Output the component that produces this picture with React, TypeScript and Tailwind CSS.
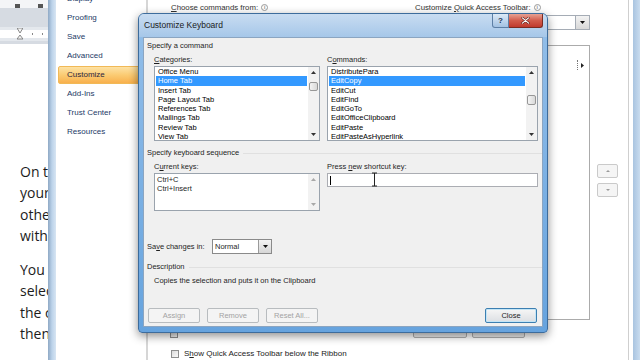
import React from "react";

const categories = ["Office Menu", "Home Tab", "Insert Tab", "Page Layout Tab", "References Tab", "Mailings Tab", "Review Tab", "View Tab"];
const commands = ["DistributePara", "EditCopy", "EditCut", "EditFind", "EditGoTo", "EditOfficeClipboard", "EditPaste", "EditPasteAsHyperlink"];
const options = ["Display", "Proofing", "Save", "Advanced", "Customize", "Add-Ins", "Trust Center", "Resources"];

function Tri({ dir, className }: { dir: "up" | "down" | "right"; className?: string }) {
    const pts = dir === "up" ? "0,4 3.5,0 7,4" : dir === "down" ? "0,0 7,0 3.5,4" : "0,0 4,3.5 0,7";
    const box = dir === "right" ? "0 0 4 7" : "0 0 7 4";
    return (
        <svg viewBox={box} className={className} preserveAspectRatio="none">
            <polygon points={pts} fill="currentColor" />
        </svg>
    );
}

function Info() {
    return (
        <span className="w-[7px] h-[7px] rounded-full border border-[#9a9a9a] text-[#8a8a8a] text-[5px] leading-[5px] flex items-center justify-center font-bold">i</span>
    );
}

function ScrollBar({ thumb, disabled }: { thumb?: string; disabled?: boolean }) {
    const arrow = disabled ? "text-[#a8a8a8]" : "text-[#333]";
    return (
        <div className="w-[11px] flex flex-col bg-[#f2f2f2]">
            <div className={`h-[11px] flex items-center justify-center ${arrow}`}>
                <Tri dir="up" className="w-[5px] h-[3px]" />
            </div>
            <div className="flex-1">
                {thumb && <div className={`mx-[1px] rounded-[2px] border border-[#979797] bg-gradient-to-r from-[#f4f4f4] to-[#d9d9d9] ${thumb}`} />}
            </div>
            <div className={`h-[11px] flex items-center justify-center ${arrow}`}>
                <Tri dir="down" className="w-[5px] h-[3px]" />
            </div>
        </div>
    );
}

function ListBox({ items, selected, thumb, className }: { items: string[]; selected: number; thumb: string; className: string }) {
    return (
        <div className={`flex border border-[#9aa3ad] bg-white ${className}`}>
            <div className="flex-1 flex flex-col px-[1px] overflow-hidden">
                {items.map((t, i) => (
                    <div
                        key={t}
                        className={`h-[9.25px] shrink-0 leading-[9.25px] pl-[2px] whitespace-nowrap ${i === selected ? "bg-[#3399ff] text-white" : "text-black"}`}
                    >
                        {t}
                    </div>
                ))}
            </div>
            <ScrollBar thumb={thumb} />
        </div>
    );
}

function GroupHeader({ label, line }: { label: string; line?: boolean }) {
    return (
        <div className="h-[16px] shrink-0 flex items-center pl-[3px] gap-[4px]">
            <span className="whitespace-nowrap">{label}</span>
            {line && <div className="flex-1 h-px bg-[#e0e0e0]" />}
        </div>
    );
}

function DlgButton({ label, disabled }: { label: string; disabled?: boolean }) {
    return (
        <div
            className={`w-[52px] h-[15px] rounded-[2px] border flex items-center justify-center ${
                disabled
                    ? "border-[#b8bcbf] bg-[#f4f4f4] text-[#a3a3a3]"
                    : "border-[#3c7fb1] bg-gradient-to-b from-[#f6f6f6] to-[#dcdfe3] text-[#1e1e1e] shadow-[inset_0_0_0_1px_#c4e5f6]"
            }`}
        >
            {label}
        </div>
    );
}

function CustomizeKeyboard() {
    return (
        <div className="absolute left-[138px] top-[13px] w-[410px] h-[320px] rounded-t-[6px] rounded-b-[4px] border border-[#3d6c9c] bg-gradient-to-b from-[#94bfe9] to-[#66a3de] shadow-[0_3px_10px_rgba(0,0,0,0.45)] flex flex-col overflow-hidden">
            <div className="h-[23px] shrink-0 flex justify-between bg-gradient-to-b from-[#c8dcf1] to-[#a6c7e9] pl-[5px] pr-[4px]">
                <span className="self-center text-[8.5px] text-[#1a1a1a]">Customize Keyboard</span>
                <div className="flex self-start">
                    <div className="w-[17px] h-[14px] rounded-bl-[3px] border border-t-0 border-[#5d7fa5] bg-gradient-to-b from-[#dce9f6] to-[#a3c2e3] flex items-center justify-center text-[8px] font-bold text-[#23364f]">?</div>
                    <div className="w-[34px] h-[14px] rounded-br-[3px] border border-t-0 border-l-0 border-[#7b2b22] bg-gradient-to-b from-[#e6a193] via-[#d25b4c] to-[#c0392d] flex items-center justify-center">
                        <svg viewBox="0 0 10 8" className="w-[9px] h-[7px]">
                            <path d="M1.5 1 L8.5 7 M8.5 1 L1.5 7" stroke="#5a1a14" strokeWidth="2.6" strokeLinecap="round" />
                            <path d="M1.5 1 L8.5 7 M8.5 1 L1.5 7" stroke="#ffffff" strokeWidth="1.5" strokeLinecap="round" />
                        </svg>
                    </div>
                </div>
            </div>
            <div className="flex-1 px-[4px] pb-[5px] flex flex-col">
                <div className="flex-1 bg-[#f0f0f0] border border-[#8ba5c1] flex flex-col text-[7.5px] text-[#1e1e1e]">
                    <GroupHeader label="Specify a command" />
                    <div className="flex pl-[10px] gap-[7px]">
                        <div className="w-[166px] flex flex-col">
                            <div className="h-[12px] flex items-center"><span><span className="underline">C</span>ategories:</span></div>
                            <ListBox items={categories} selected={1} thumb="mt-[4px] h-[9px]" className="h-[75px]" />
                        </div>
                        <div className="w-[211px] flex flex-col">
                            <div className="h-[12px] flex items-center"><span>C<span className="underline">o</span>mmands:</span></div>
                            <ListBox items={commands} selected={1} thumb="mt-[17px] h-[10px]" className="h-[75px]" />
                        </div>
                    </div>
                    <div className="mt-[4px]"><GroupHeader label="Specify keyboard sequence" line /></div>
                    <div className="flex pl-[10px] gap-[7px]">
                        <div className="w-[166px] flex flex-col">
                            <div className="h-[12px] flex items-center"><span>C<span className="underline">u</span>rrent keys:</span></div>
                            <div className="h-[38px] flex border border-[#9aa3ad] bg-white">
                                <div className="flex-1 flex flex-col pl-[2px] pt-[1px]">
                                    <div className="h-[9.25px] leading-[9.25px]">Ctrl+C</div>
                                    <div className="h-[9.25px] leading-[9.25px]">Ctrl+Insert</div>
                                </div>
                                <ScrollBar disabled />
                            </div>
                        </div>
                        <div className="w-[211px] flex flex-col">
                            <div className="h-[12px] flex items-center"><span>Press <span className="underline">n</span>ew shortcut key:</span></div>
                            <div className="h-[14px] border border-[#abadb3] bg-white flex items-center pl-[2px]">
                                <div className="w-px h-[9px] bg-black" />
                            </div>
                        </div>
                    </div>
                    <div className="mt-[28px] h-[15px] flex items-center">
                        <span className="w-[68px] pl-[3px]">Sa<span className="underline">v</span>e changes in:</span>
                        <div className="w-[60px] h-[15px] flex border border-[#8a8a8a] bg-white">
                            <span className="flex-1 pl-[2px] leading-[13px]">Normal</span>
                            <div className="w-[13px] border-l border-[#9a9a9a] bg-gradient-to-b from-[#f4f4f4] to-[#d6d6d6] flex items-center justify-center text-[#111]">
                                <Tri dir="down" className="w-[5px] h-[3px]" />
                            </div>
                        </div>
                    </div>
                    <div className="mt-[5px]"><GroupHeader label="Description" line /></div>
                    <div className="h-[12px] flex items-center pl-[10px]">Copies the selection and puts it on the Clipboard</div>
                    <div className="mt-[21px] flex items-center pl-[4px] pr-[5px]">
                        <div className="flex gap-[7px]">
                            <DlgButton label="Assign" disabled />
                            <DlgButton label="Remove" disabled />
                            <DlgButton label="Reset All..." disabled />
                        </div>
                        <div className="flex-1" />
                        <DlgButton label="Close" />
                    </div>
                </div>
            </div>
        </div>
    );
}

function Checkbox() {
    return <div className="w-[8px] h-[8px] border border-[#8e8f8f] bg-gradient-to-br from-[#dcdcdc] to-[#fafafa]" />;
}

export default function App() {
    return (
        <div className="relative w-[640px] h-[360px] overflow-hidden flex bg-white font-['Liberation_Sans',Arial,sans-serif]">
            {/* document behind the options window */}
            <div className="w-[48px] shrink-0 flex flex-col overflow-hidden">
                <div className="h-[8px] bg-[#f4f5f7] flex items-end gap-[18px] pl-[15px]">
                    <div className="w-[5px] h-[4px] bg-[#555]" />
                    <div className="w-[5px] h-[4px] bg-[#555]" />
                </div>
                <div className="h-[19px] bg-[#d6dbe2]" />
                <div className="h-[14px] bg-[#e4e8ed] flex items-center">
                    <div className="flex-1 h-[8px] bg-white relative flex items-center pl-[17px] gap-[9px]">
                        <svg viewBox="0 0 6 12" className="w-[6px] h-[12px]">
                            <path d="M0 0 H6 L3 5 Z M3 7 L6 11 H0 Z" fill="#f4f4f4" stroke="#707070" strokeWidth="0.8" />
                        </svg>
                        <div className="w-px h-[2px] bg-[#888]" />
                        <div className="w-px h-[2px] bg-[#888]" />
                    </div>
                </div>
                <div className="h-[3px] bg-[#d6dbe2]" />
                <div className="flex-1 pt-[117px] pl-[20px] font-['Open_Sans',sans-serif] text-[14px] leading-[21.3px] text-[#1c1c1c] whitespace-nowrap">
                    <div>On the</div>
                    <div>your</div>
                    <div>other</div>
                    <div>with</div>
                    <div className="mt-[12.8px]">You can</div>
                    <div>select</div>
                    <div>the command</div>
                    <div>then</div>
                </div>
            </div>
            {/* options window frame */}
            <div className="w-[8px] shrink-0 bg-gradient-to-r from-[#8fa9c5] via-[#bcd3ea] to-[#d7e5f3]" />
            {/* options navigation */}
            <div className="w-[92px] shrink-0 bg-white border-r-2 border-[#d6d6d6] flex flex-col -mt-[11px] text-[8px] text-[#233a66]">
                {options.map(o => (
                    <div key={o} className="h-[19px] shrink-0 flex items-center">
                        {o === "Customize" ? (
                            <div className="mx-[2px] flex-1 h-[18px] rounded-[2px] border border-[#f1b957] bg-gradient-to-b from-[#fde2a4] via-[#fbcb72] to-[#f8b04c] flex items-center pl-[8px] text-[#2b2540]">{o}</div>
                        ) : (
                            <span className="pl-[11px]">{o}</span>
                        )}
                    </div>
                ))}
            </div>
            {/* options content */}
            <div className="flex-1 flex flex-col bg-white text-[7.8px] text-[#333]">
                <div className="h-[45px] shrink-0 flex pl-[23px]">
                    <div className="w-[230px] flex flex-col">
                        <div className="h-[15px] flex items-center gap-[3px]">
                            <span><span className="underline">C</span>hoose commands from:</span>
                            <Info />
                        </div>
                        <div className="h-[15px] border border-[#a5acb5]" />
                    </div>
                    <div className="ml-[14px] w-[175px] flex flex-col">
                        <div className="h-[15px] flex items-center gap-[3px]">
                            <span>Customize <span className="underline">Q</span>uick Access Toolbar:</span>
                            <Info />
                        </div>
                        <div className="h-[15px] flex border border-[#a5acb5] bg-white">
                            <div className="flex-1" />
                            <div className="w-[14px] border-l border-[#a5acb5] bg-gradient-to-b from-[#f3f3f3] to-[#d8d8d8] flex items-center justify-center text-[#111]">
                                <Tri dir="down" className="w-[5px] h-[3px]" />
                            </div>
                        </div>
                    </div>
                </div>
                <div className="h-[275px] shrink-0 flex pl-[23px]">
                    <div className="w-[230px]" />
                    <div className="ml-[14px] w-[175px] border border-[#ababab] bg-white flex flex-col">
                        <div className="mt-[13px] h-[12px] flex items-center justify-end pr-[5px] gap-[3px]">
                            <div className="w-px h-[10px] border-l border-dotted border-[#777]" />
                            <Tri dir="right" className="w-[3px] h-[5px] text-[#222]" />
                        </div>
                    </div>
                    <div className="ml-[7px] w-[21px] flex flex-col">
                        <div className="mt-[119px] h-[14px] rounded-[2px] border border-[#cacaca] bg-[#f5f5f5] flex items-center justify-center text-[#9a9a9a]">
                            <Tri dir="up" className="w-[4px] h-[2px]" />
                        </div>
                        <div className="mt-[5px] h-[14px] rounded-[2px] border border-[#cacaca] bg-[#f5f5f5] flex items-center justify-center text-[#9a9a9a]">
                            <Tri dir="down" className="w-[4px] h-[2px]" />
                        </div>
                    </div>
                </div>
                <div className="mt-[3px] h-[15px] shrink-0 flex pl-[22px]">
                    <div className="mt-[7px]"><Checkbox /></div>
                    <div className="ml-[235px] w-[54px] h-[15px] rounded-[2px] border border-[#b0b0b0] bg-[#efefef]" />
                    <div className="ml-[5px] w-[53px] h-[15px] rounded-[2px] border border-[#b0b0b0] bg-[#efefef]" />
                </div>
                <div className="mt-[10px] flex items-center pl-[23px] gap-[5px]">
                    <Checkbox />
                    <span className="text-[8px] text-[#222] whitespace-nowrap">S<span className="underline">h</span>ow Quick Access Toolbar below the Ribbon</span>
                </div>
            </div>
            {/* right edge */}
            <div className="w-[12px] shrink-0 flex">
                <div className="w-px bg-[#cfcfcf]" />
                <div className="w-[4px] bg-white" />
                <div className="flex-1 bg-gradient-to-r from-[#a9c4e0] to-[#c9dcef]" />
            </div>
            <CustomizeKeyboard />
            {/* mouse I-beam cursor */}
            <svg viewBox="0 0 7 15" className="absolute left-[371px] top-[172px] w-[7px] h-[15px]">
                <path d="M1 1 H6 M3.5 1 V14 M1 14 H6" stroke="#222" strokeWidth="1" fill="none" />
            </svg>
        </div>
    );
}
